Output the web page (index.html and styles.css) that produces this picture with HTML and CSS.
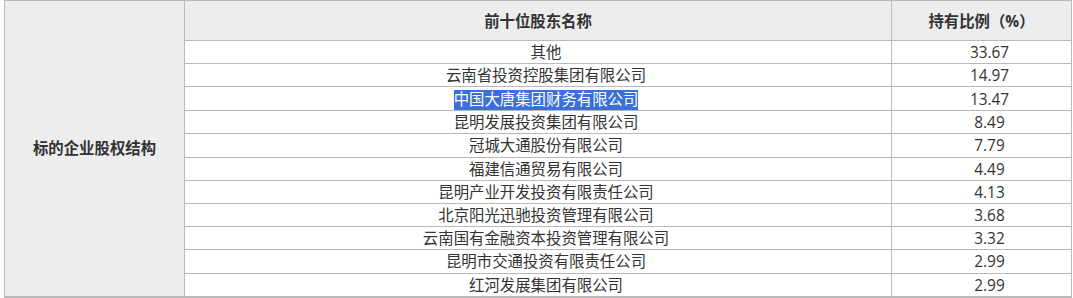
FILE: index.html
```html
<!DOCTYPE html>
<html lang="zh-CN">
<head>
<meta charset="utf-8">
<title>标的企业股权结构</title>
<link rel="stylesheet" href="styles.css">
</head>
<body>
<div class="wrap">
  <table class="equity">
    <colgroup>
      <col class="c-label">
      <col class="c-name">
      <col class="c-val">
    </colgroup>
    <tr class="head">
      <th class="label" rowspan="12">标的企业股权结构</th>
      <th>前十位股东名称</th>
      <th>持有比例（%）</th>
    </tr>
    <tr><td>其他</td><td>33.67</td></tr>
    <tr><td>云南省投资控股集团有限公司</td><td>14.97</td></tr>
    <tr><td><span class="sel">中国大唐集团财务有限公司</span></td><td>13.47</td></tr>
    <tr><td>昆明发展投资集团有限公司</td><td>8.49</td></tr>
    <tr><td>冠城大通股份有限公司</td><td>7.79</td></tr>
    <tr><td>福建信通贸易有限公司</td><td>4.49</td></tr>
    <tr><td>昆明产业开发投资有限责任公司</td><td>4.13</td></tr>
    <tr><td>北京阳光迅驰投资管理有限公司</td><td>3.68</td></tr>
    <tr><td>云南国有金融资本投资管理有限公司</td><td>3.32</td></tr>
    <tr><td>昆明市交通投资有限责任公司</td><td>2.99</td></tr>
    <tr><td>红河发展集团有限公司</td><td>2.99</td></tr>
  </table>
  <table class="equity next">
    <colgroup>
      <col class="c-label">
      <col>
    </colgroup>
    <tr><td class="label"></td><td></td></tr>
  </table>
</div>
</body>
</html>
```
FILE: styles.css
```css
html, body {
  margin: 0;
  padding: 0;
  background: #fff;
  overflow: hidden;
}
body {
  font-family: "Open Sans", "Noto Sans CJK SC", sans-serif;
  font-size: 15.4px;
  color: #333;
}
.wrap {
  padding: 0 0 0 4px;
  height: 298px;
  overflow: hidden;
}
.equity {
  border-collapse: collapse;
  table-layout: fixed;
  width: 1068px;
}
.c-label { width: 180px; }
.c-val { width: 180px; }
.equity th,
.equity td {
  border: 1px solid #b9b9b9;
  padding: 0;
  text-align: center;
  white-space: nowrap;
}
.equity td {
  line-height: 21.18px;
  height: 21.18px;
  padding: 1px 0 0 16px;
}
.head th {
  background: #ededed;
  font-weight: bold;
  line-height: 37px;
  height: 37px;
  padding-top: 2px;
}
.equity th.label {
  background: #ededed;
  font-weight: bold;
  padding-top: 0;
}
.sel {
  display: inline-block;
  background: #3a70d8;
  color: #fff;
  height: 20px;
  line-height: 20px;
  vertical-align: middle;
}
.next td {
  height: 40px;
  border-top: 1px solid #b9b9b9;
}
```
